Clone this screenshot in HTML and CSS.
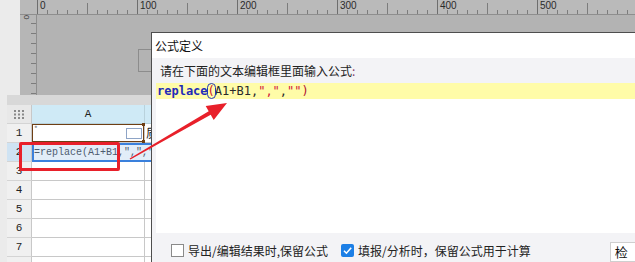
FILE: index.html
```html
<!DOCTYPE html>
<html lang="zh-CN">
<head>
    <meta charset="UTF-8">
    <title>公式定义</title>
    <link rel="stylesheet" href="styles.css">
</head>
<body>
    <div class="app">
        <div class="designer">
            <div class="ruler-corner"></div>
            <div class="ruler-top">
                <span>0</span><span>100</span><span>200</span><span>300</span><span>400</span><span>500</span>
            </div>
            <div class="ruler-left"><span class="ruler-zero">0</span></div>
            <div class="canvas"><div class="canvas-shape"></div></div>
        </div>
        <div class="band"></div>

        <div class="sheet">
            <div class="row row-head">
                <div class="rh rh-corner">
                    <svg width="10" height="9" viewBox="0 0 10 9">
                        <g fill="#8a8a8a">
                            <rect x="0" y="0" width="2" height="2"/><rect x="4" y="0" width="2" height="2"/><rect x="8" y="0" width="2" height="2"/>
                            <rect x="0" y="3.5" width="2" height="2"/><rect x="4" y="3.5" width="2" height="2"/><rect x="8" y="3.5" width="2" height="2"/>
                            <rect x="0" y="7" width="2" height="2"/><rect x="4" y="7" width="2" height="2"/><rect x="8" y="7" width="2" height="2"/>
                        </g>
                    </svg>
                </div>
                <div class="col-head">A</div>
                <div class="col-head"></div>
            </div>
            <div class="row">
                <div class="rh">1</div>
                <div class="cell cell-picked"><i class="mark">*</i><span class="mini-box"></span></div>
                <div class="cell">质</div>
            </div>
            <div class="row row-current">
                <div class="rh">2</div>
                <div class="cell cell-edit">=replace(A1+B1,",",""</div>
            </div>
            <div class="row"><div class="rh">3</div><div class="cell"></div><div class="cell"></div></div>
            <div class="row"><div class="rh">4</div><div class="cell"></div><div class="cell"></div></div>
            <div class="row"><div class="rh">5</div><div class="cell"></div><div class="cell"></div></div>
            <div class="row"><div class="rh">6</div><div class="cell"></div><div class="cell"></div></div>
            <div class="row"><div class="rh">7</div><div class="cell"></div><div class="cell"></div></div>
            <div class="row"><div class="rh"></div><div class="cell"></div><div class="cell"></div></div>
        </div>

        <div class="callout"></div>
        <svg class="arrow" width="115" height="75" viewBox="0 0 115 75">
            <polygon fill="#e8202a" points="9.6,63.4 88.7,16.3 85.7,11.1 107,8 93.7,24.9 90.7,19.7 10.4,64.6"/>
        </svg>

        <section class="dialog">
            <div class="dialog-title">公式定义</div>
            <div class="dialog-body">
                <div class="prompt">请在下面的文本编辑框里面输入公式<span class="colon">:</span></div>
                <div class="editor">
                    <div class="code-line"><b class="kw">replace</b><span class="brace">(</span>A1+B1,<span class="str">","</span>,<span class="str">""</span><span class="close">)</span></div>
                </div>
                <div class="options">
                    <span class="check"></span>
                    <span class="opt-text">导出/编辑结果时,保留公式</span>
                    <span class="check check-on">
                        <svg width="13" height="13" viewBox="0 0 13 13"><path d="M3 6.8 L5.4 9.2 L10.2 3.8" fill="none" stroke="#fff" stroke-width="1.6"/></svg>
                    </span>
                    <span class="opt-text">填报/分析时，保留公式用于计算</span>
                    <button type="button" class="btn">检</button>
                </div>
            </div>
        </section>
    </div>
</body>
</html>
```

FILE: styles.css
```css
body {
    margin: 0;
    font-family: "Noto Sans CJK SC", "Noto Sans", sans-serif;
}
.app {
    position: relative;
    width: 635px;
    height: 262px;
    overflow: hidden;
    background-color: #ebebeb;
}

/* designer with rulers */
.designer {
    margin-left: 20px;
    display: grid;
    grid-template-columns: 17px 1fr;
    grid-template-rows: 15px 80px;
}
.ruler-corner {
    background-color: #b9b9b9;
    border-bottom: 1px solid #8e8e8e;
}
.ruler-top {
    display: flex;
    background-color: #bababa;
    border-bottom: 1px solid #8e8e8e;
    background-image:
        repeating-linear-gradient(to right, #6e6e6e 0 1px, transparent 1px 100px),
        repeating-linear-gradient(to right, #7c7c7c 0 1px, transparent 1px 50px),
        repeating-linear-gradient(to right, #7c7c7c 0 1px, transparent 1px 10px);
    background-size: 100% 100%, 100% 11px, 100% 4px;
    background-position: left bottom;
    background-repeat: no-repeat;
}
.ruler-top span {
    flex: 0 0 100px;
    padding-left: 3px;
    box-sizing: border-box;
    font-family: "Liberation Sans", sans-serif;
    font-size: 10px;
    line-height: 11px;
    color: #2a2a2a;
}
.ruler-left {
    background-color: #b6b6b6;
    border-right: 1px solid #8e8e8e;
    background-image: repeating-linear-gradient(to bottom, transparent 0 8px, #7c7c7c 8px 9px, transparent 9px 10px);
    background-size: 5px 100%;
    background-position: right top;
    background-repeat: no-repeat;
}
.ruler-zero {
    display: block;
    width: 8px;
    margin: 0 0 0 2px;
    font-family: "Liberation Sans", sans-serif;
    font-size: 8px;
    line-height: 8px;
    color: #333;
    transform: rotate(90deg);
}
.canvas {
    position: relative;
    background-color: #b3b3b3;
}
.canvas-shape {
    position: absolute;
    left: 101px;
    top: 34px;
    width: 20px;
    height: 21px;
    border: 1px solid #8c8c8c;
}
.band {
    height: 10px;
    margin-left: 7px;
    background-color: #d8d8d8;
}

/* spreadsheet */
.sheet {
    margin-left: 7px;
    font-family: "Liberation Mono", monospace;
    font-size: 11px;
    color: #222;
}
.row {
    display: grid;
    grid-template-columns: 25px 113px 1fr;
    height: 19px;
}
.rh {
    display: flex;
    align-items: center;
    justify-content: center;
    background-color: #f0f0f0;
    border-right: 1px solid #c8c8c8;
    border-bottom: 1px solid #d4d4d4;
}
.rh-corner {
    background-color: #e8e8e8;
}
.col-head {
    display: flex;
    align-items: center;
    justify-content: center;
    background-color: #cfeaf6;
    border-right: 1px solid #b9d2dc;
    border-bottom: 1px solid #b9d2dc;
}
.cell {
    position: relative;
    background-color: #fff;
    border-right: 1px solid #c8c8c8;
    border-bottom: 1px solid #c8c8c8;
    padding-left: 1px;
    font-family: "Noto Sans CJK SC", sans-serif;
    font-size: 12px;
    line-height: 18px;
    white-space: nowrap;
    overflow: hidden;
}
.cell-picked {
    display: flex;
    justify-content: flex-end;
    align-items: center;
    padding-right: 2px;
    box-shadow: inset 0 0 0 1px #6e3f14;
    overflow: visible;
}
.cell-picked::before,
.cell-picked::after {
    content: "";
    position: absolute;
    width: 3px;
    height: 3px;
    background-color: #6e3f14;
}
.cell-picked::before {
    right: -1px;
    top: -1px;
}
.cell-picked::after {
    right: -1px;
    bottom: -1px;
}
.mark {
    position: absolute;
    left: 2px;
    top: -4px;
    font-style: normal;
    font-size: 8px;
    color: #777;
}
.mini-box {
    width: 14px;
    height: 9px;
    border: 1px solid #8ea4c6;
    background-color: #fff;
}
.row-current .rh {
    background-color: #cfe3f3;
}
.cell-edit {
    grid-column: span 2;
    background-color: #e2edf8;
    border: 2px solid #3a80dc;
    border-right: none;
    padding-left: 0;
    font-family: "Liberation Mono", monospace;
    font-size: 10px;
    line-height: 15px;
    color: #4e5c70;
}

/* red annotation */
.callout {
    position: absolute;
    left: 19px;
    top: 142px;
    width: 95px;
    height: 23px;
    border: 3px solid #e8202a;
    border-radius: 2px;
    z-index: 3;
}
.arrow {
    position: absolute;
    left: 120px;
    top: 95px;
    z-index: 3;
}

/* formula dialog */
.dialog {
    position: absolute;
    left: 151px;
    top: 32px;
    width: 560px;
    height: 240px;
    box-sizing: border-box;
    border-left: 1px solid #4e4e4e;
    border-top: 1px solid #4e4e4e;
    background-color: #f3f3f6;
    display: flex;
    flex-direction: column;
    z-index: 2;
}
.dialog-title {
    height: 25px;
    padding-left: 3px;
    background-color: #fff;
    font-size: 12px;
    line-height: 25px;
    color: #111;
}
.dialog-body {
    padding-left: 4px;
}
.prompt {
    height: 25px;
    padding-left: 4px;
    font-size: 12px;
    line-height: 25px;
    color: #222;
}
.colon {
    color: #8a3a6a;
}
.editor {
    height: 150px;
    background-color: #fff;
}
.code-line {
    height: 16px;
    padding-left: 1px;
    background-color: #fffca8;
    font-family: "DejaVu Sans Mono", monospace;
    font-size: 12px;
    line-height: 16px;
    color: #2a2a2a;
    white-space: pre;
}
.kw {
    color: #1f2bb8;
}
.brace {
    color: #d0102a;
    outline: 1px solid #2235b8;
    outline-offset: 0;
    border-radius: 4px;
}
.str {
    color: #d0183c;
}
.close {
    color: #b01030;
}
.options {
    display: flex;
    align-items: center;
    height: 29px;
    padding: 0 0 0 15px;
    font-size: 12px;
    color: #222;
}
.check {
    flex: 0 0 13px;
    height: 13px;
    box-sizing: border-box;
    border: 1px solid #8a8a8a;
    background-color: #fff;
    margin-top: 6px;
}
.check-on {
    border: none;
    border-radius: 2px;
    background-color: #1c7fe6;
    margin-left: 13px;
}
.check-on svg {
    display: block;
}
.opt-text {
    margin-left: 4px;
    margin-top: 6px;
    line-height: 15px;
    white-space: nowrap;
}
.btn {
    margin-left: 79px;
    margin-top: 9px;
    width: 90px;
    height: 20px;
    padding: 0 0 0 4px;
    text-align: left;
    border: 1px solid #cfcfcf;
    background-color: #fff;
    font-family: "Noto Sans CJK SC", sans-serif;
    font-size: 13px;
    line-height: 18px;
    color: #111;
}
```
